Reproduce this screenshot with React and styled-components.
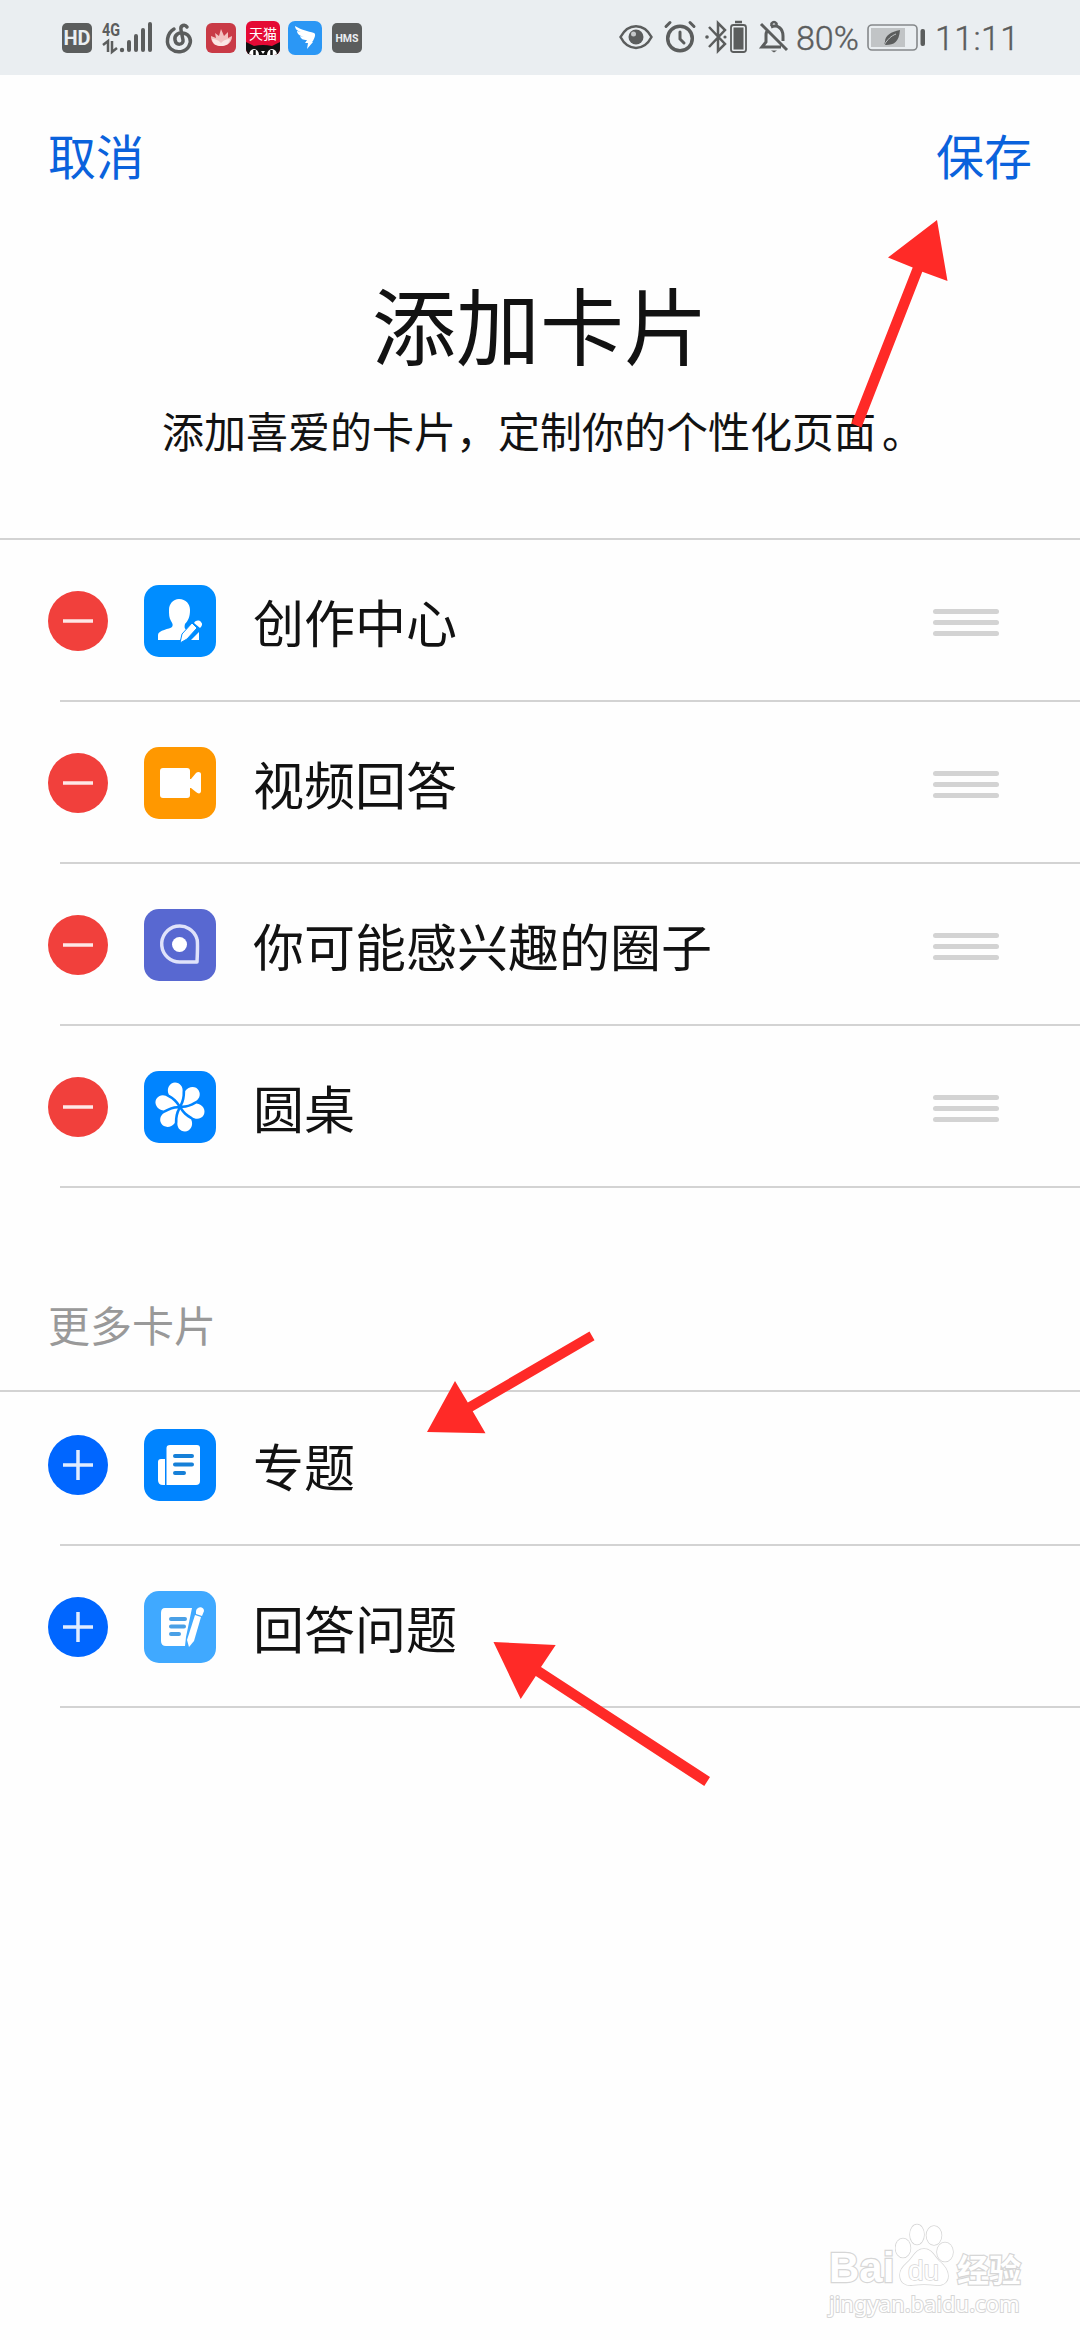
import styled, { createGlobalStyle } from 'styled-components'

const GlobalStyle = createGlobalStyle`
* {
  box-sizing: border-box;
}
body {
  margin: 0;
  background: #fefefe;
  font-family: "Noto Sans CJK SC", sans-serif;
  color: #121212;
}
`

const Page = styled.div`
position: relative;
width: 1080px;
height: 2340px;
overflow: hidden;
background: #fefefe;
`

const StatusBar = styled.div`
height: 75px;
background: #eaeef1;
display: flex;
align-items: flex-start;
padding-left: 62px;
color: #5b5d5d;
`

const StatusItem = styled.div`
flex: none;
width: ${(p) => p.$w}px;
margin-left: ${(p) => p.$gap || 0}px;
margin-top: ${(p) => p.$top || 21}px;
svg {
  display: block;
  overflow: visible;
}
`

const StatusBadge = styled(StatusItem)`
height: 30px;
border-radius: 5px;
background: #5b5d5d;
color: #eaeef1;
font-family: "Roboto", sans-serif;
font-weight: ${(p) => p.$weight};
font-size: ${(p) => p.$size}px;
line-height: 31px;
text-align: center;
`

const StatusText = styled(StatusItem)`
font-family: "Roboto", sans-serif;
font-weight: 300;
font-size: 34px;
line-height: 34px;
letter-spacing: ${(p) => p.$spacing || 0}px;
white-space: nowrap;
-webkit-text-stroke: 0.4px #5b5d5d;
`

const Tmall = styled(StatusItem)`
position: relative;
height: 34px;
border-radius: 6px;
overflow: hidden;
background: #e50a35;
color: #fff;
font-size: 14px;
line-height: 25px;
text-align: center;
svg {
  position: absolute;
  left: 0;
  bottom: 0;
}
`

const Toolbar = styled.div`
display: flex;
justify-content: space-between;
padding: 43px 48px 0;
`

const TextButton = styled.button`
border: 0;
padding: 0;
background: none;
font-family: inherit;
font-size: 48px;
line-height: 72px;
color: #0a62dc;
`

const Title = styled.h1`
margin: 85px 0 0;
font-size: 84px;
font-weight: 400;
line-height: 96px;
text-align: center;
`

const Subtitle = styled.p`
margin: 29px 0 0;
font-size: 42px;
line-height: 60px;
text-align: center;
`

const FullStop = styled.span`
margin: 0 -6px 0 6px;
`

const SectionTitle = styled.h2`
margin: 106px 0 0;
padding-left: 48px;
font-size: 42px;
font-weight: 400;
line-height: 60px;
color: #999;
`

const CardList = styled.ul`
list-style: none;
margin: ${(p) => p.$top}px 0 0;
padding: 0;
border-top: 2px solid #d3d3d3;
`

const Row = styled.li`
display: flex;
align-items: center;
height: 162px;
margin-left: 60px;
padding-top: 2px;
border-bottom: 2px solid #d3d3d3;
${(p) => p.$short && 'height: 154px; padding: 0 0 6px;'}
`

const ToggleButton = styled.button`
flex: none;
width: 60px;
height: 60px;
margin-left: -12px;
padding: 0;
border: 0;
border-radius: 50%;
background: ${(p) => (p.$add ? '#0066ff' : '#f1403c')};
svg {
  display: block;
}
`

const IconTile = styled.div`
flex: none;
width: 72px;
height: 72px;
margin-left: 36px;
border-radius: 15px;
background: ${(p) => p.$color};
svg {
  display: block;
}
`

const Label = styled.span`
flex: 1;
margin-left: 37px;
font-size: 51px;
line-height: 76px;
`

const Handle = styled.div`
display: flex;
flex-direction: column;
gap: 6px;
width: 66px;
margin: 3px 81px 0 0;
`

const HandleBar = styled.div`
height: 5px;
border-radius: 3px;
background: #d3d3d3;
`

// hints drawn over the page
const Arrows = styled.svg`
position: absolute;
left: 0;
top: 0;
pointer-events: none;
`

const Watermark = styled.div`
position: absolute;
left: 829px;
top: 2222px;
width: 196px;
color: #fff;
-webkit-text-stroke: 2.4px #d6d6d6;
paint-order: stroke fill;
`

const WatermarkLogo = styled.div`
display: flex;
align-items: flex-end;
height: 66px;
svg {
  flex: none;
}
`

const WatermarkWord = styled.span`
font-family: ${(p) => (p.$cjk ? '"Noto Sans CJK SC"' : '"Liberation Sans"')}, sans-serif;
font-weight: 700;
font-size: ${(p) => (p.$cjk ? 32 : 42)}px;
line-height: 40px;
white-space: nowrap;
width: ${(p) => (p.$cjk ? 67 : 66)}px;
`

const WatermarkUrl = styled.div`
font-family: "Noto Sans", sans-serif;
font-size: 22px;
line-height: 30px;
white-space: nowrap;
-webkit-text-stroke-width: 2px;
`

const ICONS = {
  creator: (
    <svg width="72" height="72" viewBox="0 0 72 72" fill="#fff">
      <path d="M35 14c7 0 11 5 11 11 0 7-2 11-5 14-1 4 0 5 2 6l4 1-11 9H14v-5c0-5 12-6 14-8 1-2 1-3-1-6-2-3-2-7-2-11 0-6 4-11 10-11z" />
      <path d="M55 47v8h-8z" />
      <path d="M36 58l2-9 10-11 5 5-10 11z" stroke="#008dff" strokeWidth="1" />
      <path d="M50 38c2-3 5-3 7-1 2 2 1 4-1 6z" />
    </svg>
  ),
  video: (
    <svg width="72" height="72" viewBox="0 0 72 72" fill="#fff">
      <rect x="16" y="21" width="30" height="30" rx="3" />
      <path d="M45 32h2l5-6c2-2 5-1 5 1v17c0 3-3 3-5 1l-5-4h-2z" />
    </svg>
  ),
  circle: (
    <svg width="72" height="72" viewBox="0 0 72 72" fill="none">
      <path d="M53 53H36A18 18 0 1 1 53 30q1 3 0 23z" stroke="#dfe2fa" strokeWidth="3.500" strokeLinejoin="round" />
      <circle cx="35.500" cy="35.500" r="7.500" fill="#fff" />
    </svg>
  ),
  table: (
    <svg width="72" height="72" viewBox="0 0 72 72" fill="#fff">
      {[0, 60, 120, 180, 240, 300].map((angle) => (
        <path
          key={angle}
          transform={`rotate(${angle} 36 36)`}
          d="M35.800 33.500C34 30 30 26.500 24.800 23.500 22 17.500 26 11.500 31 11.500 36 11.500 39.500 16 38.500 21 38.800 26 37.500 30 35.800 33.500z"
        />
      ))}
    </svg>
  ),
  topic: (
    <svg width="72" height="72" viewBox="0 0 72 72">
      <path d="M21 30h-4q-3 0-3 3v18q0 5 5 5h2V30z" fill="#fff" />
      <path d="M26 16h27q3 0 3 3v33q0 4-4 4H22.500V19q0-3 3.500-3z" fill="#fff" />
      <path d="M31 27h17M31 35.500h17M31 44h9" stroke="#1680d8" strokeWidth="4" strokeLinecap="round" />
    </svg>
  ),
  question: (
    <svg width="72" height="72" viewBox="0 0 72 72">
      <path d="M21 17h27l-6 29-1 9H22q-5 0-5-5V22q0-5 4-5z" fill="#fff" />
      <path d="M27 28h14M27 35.500h13M27 43h8" stroke="#4aa0e6" strokeWidth="4" strokeLinecap="round" />
      <path d="M51 24l6 2-7 24-5 6-2-7z" fill="#fff" />
      <path d="M52 20c1-5 8-5 8 0l-2 5-6-2z" fill="#fff" />
    </svg>
  )
}

const added = [
  { label: '创作中心', icon: 'creator', color: '#008dff' },
  { label: '视频回答', icon: 'video', color: '#ff9800' },
  { label: '你可能感兴趣的圈子', icon: 'circle', color: '#5868d1' },
  { label: '圆桌', icon: 'table', color: '#0084ff' }
]

const more = [
  { label: '专题', icon: 'topic', color: '#0084ff' },
  { label: '回答问题', icon: 'question', color: '#40a9ff' }
]

const CardRow = ({ card, add, short }) => (
  <Row $short={short}>
    <ToggleButton $add={add}>
      <svg width="60" height="60" viewBox="0 0 60 60" stroke="#fff" strokeOpacity="0.880" strokeWidth="3.500">
        <path d={add ? 'M15 30h30M30 15v30' : 'M15 30h30'} />
      </svg>
    </ToggleButton>
    <IconTile $color={card.color}>{ICONS[card.icon]}</IconTile>
    <Label>{card.label}</Label>
    {!add && (
      <Handle>
        <HandleBar />
        <HandleBar />
        <HandleBar />
      </Handle>
    )}
  </Row>
)

const Status = () => (
  <StatusBar>
    <StatusBadge $w={30} $top={23} $size={20} $weight={700}>HD</StatusBadge>
    <StatusItem $w={50} $gap={10}>
      <svg width="50" height="32" viewBox="0 0 50 32" fill="currentColor">
        <text x="0" y="15" fontFamily="Roboto" fontWeight="700" fontSize="18" textLength="18" lengthAdjust="spacingAndGlyphs">4G</text>
        <path d="M1 24l5-4v11M10 20v11l5-4" fill="none" stroke="currentColor" strokeWidth="2.500" />
        <circle cx="20" cy="29" r="2.200" />
        <path d="M27 29v-8M34 29v-14M41 29v-20M48 29V3" stroke="currentColor" strokeWidth="4" strokeLinecap="round" />
      </svg>
    </StatusItem>
    <StatusItem $w={28} $gap={13}>
      <svg width="28" height="32" viewBox="0 0 28 32" fill="none" stroke="currentColor" strokeWidth="3.500" strokeLinecap="round">
        <path d="M22 6c-2-3-7-2-6 3l2 10c1 5-7 6-8 0-1-5 4-8 8-7 7 1 9 8 6 13-3 6-12 8-18 3C0 23 2 12 9 8" />
      </svg>
    </StatusItem>
    <StatusItem $w={30} $gap={13} $top={23}>
      <svg width="30" height="30" viewBox="0 0 30 30">
        <rect width="30" height="30" rx="6" fill="#c93a46" />
        <path d="M5 13l5 2-1-5 4 3 2-7 3 7 4-4v6l4-2c0 6-4 10-11 10S5 19 5 13z" fill="#f3c1c0" />
        <path d="M6 16c4 0 6 1 9 4 3-3 5-4 9-4-1 5-4 7-9 7s-8-2-9-7z" fill="#fbe7e4" />
      </svg>
    </StatusItem>
    <Tmall $w={34} $gap={10}>
      天猫
      <svg width="34" height="13" viewBox="0 0 34 13">
        <path d="M0 0l8 4q9-2 18 0l8-4v13H0z" fill="#111" />
        <path d="M3 13a5 6 0 0 1 10 0zM21 13a5 6 0 0 1 10 0zM15 9h4l-2 3z" fill="#fff" />
        <path d="M8.500 8v5M25.500 8v5" stroke="#111" strokeWidth="2.500" />
      </svg>
    </Tmall>
    <StatusItem $w={34} $gap={8}>
      <svg width="34" height="34" viewBox="0 0 34 34">
        <rect width="34" height="34" rx="7" fill="#2b97f5" />
        <path d="M7 5c6 4 13 5 19 7 2 1 1 4-1 8h-1l1 1-6 7 1-6h-3l2-3c-4 0-6-1-7-4l4 1c-4-1-7-3-7-6l4 1C9 10 7 8 7 5z" fill="#fff" />
      </svg>
    </StatusItem>
    <StatusBadge $w={30} $gap={10} $top={23} $size={10.5} $weight={700}>HMS</StatusBadge>

    <StatusItem $w={34} $gap={257}>
      <svg width="34" height="32" viewBox="0 0 34 32" fill="none" stroke="currentColor" strokeWidth="2.500">
        <path d="M1.500 16C9 1.500 25 1.500 32.500 16 25 30.500 9 30.500 1.500 16z" />
        <circle cx="17" cy="16" r="7.500" fill="currentColor" stroke="none" />
        <circle cx="14.500" cy="13" r="2.500" fill="#c5c8ca" stroke="none" />
      </svg>
    </StatusItem>
    <StatusItem $w={32} $gap={11}>
      <svg width="32" height="32" viewBox="0 0 32 32" fill="none" stroke="currentColor" strokeWidth="3" strokeLinecap="round">
        <circle cx="16" cy="17.500" r="12.300" strokeWidth="3.500" />
        <path d="M16 11v7l4 4M2 5.500l4-4M26 1.500l4 4" />
      </svg>
    </StatusItem>
    <StatusItem $w={42} $gap={10}>
      <svg width="42" height="32" viewBox="0 0 42 32" fill="none" stroke="currentColor" strokeWidth="2.500">
        <path d="M3 6l16 17-7 7V2l7 7L3 26" />
        <circle cx="1" cy="16" r="1.800" fill="currentColor" stroke="none" />
        <circle cx="19" cy="16" r="1.600" fill="currentColor" stroke="none" />
        <rect x="25" y="4" width="15" height="27" rx="2.500" strokeWidth="1.800" />
        <rect x="27.500" y="6.500" width="10" height="22" fill="currentColor" stroke="none" />
        <path d="M29 1h7" />
      </svg>
    </StatusItem>
    <StatusItem $w={28} $gap={12}>
      <svg width="28" height="32" viewBox="0 0 28 32" fill="none" stroke="currentColor" strokeWidth="3">
        <path d="M1 3l26 26M21 26H2l4-5V14c0-2 .5-3 1-4M11 6c7-3 12 2 12 9v5" />
        <path d="M11.500 5V2.500q2.500-3 5 0V5" strokeWidth="2.500" />
        <path d="M11 29.500h6l-3 2z" fill="currentColor" stroke="none" />
      </svg>
    </StatusItem>
    <StatusText $w={62} $gap={8}>80%</StatusText>
    <StatusItem $w={59} $gap={9}>
      <svg width="59" height="32" viewBox="0 0 59 32">
        <rect x="1" y="4" width="49" height="25" rx="4" fill="none" stroke="#85888a" strokeWidth="1.600" />
        <rect x="4" y="7" width="34" height="19" fill="#c1c4c6" />
        <path d="M33 9c-9 2-15 5-15 12l-1 2 2 1c8 0 13-3 14-15z" fill="currentColor" />
        <path d="M17 24c4-6 7-9 12-11" fill="none" stroke="#c1c4c6" />
        <rect x="53.500" y="8" width="4.500" height="17" rx="2" fill="currentColor" />
      </svg>
    </StatusItem>
    <StatusText $w={80} $gap={9} $spacing={0.4}>11:11</StatusText>
  </StatusBar>
)

export default function App() {
  return (
    <Page>
      <GlobalStyle />
      <Status />
      <Toolbar>
        <TextButton>取消</TextButton>
        <TextButton>保存</TextButton>
      </Toolbar>
      <Title>添加卡片</Title>
      <Subtitle>添加喜爱的卡片，定制你的个性化页面<FullStop>。</FullStop></Subtitle>
      <CardList $top={78}>
        {added.map((card) => (
          <CardRow key={card.label} card={card} />
        ))}
      </CardList>
      <SectionTitle>更多卡片</SectionTitle>
      <CardList $top={36}>
        {more.map((card, index) => (
          <CardRow key={card.label} card={card} add short={index === 0} />
        ))}
      </CardList>
      <Arrows width="1080" height="2340" viewBox="0 0 1080 2340" fill="#ff2a27">
        <path d="M937 220L947.500 281 922.300 271.700 861.500 427.500 851.500 423.500 912.700 267.500 888 257.500z" />
        <path d="M427 1432L455 1381 467.800 1402.500 589.500 1331.500 594.500 1340.300 472.700 1411.300 485.500 1433.300z" />
        <path d="M493.500 1642L555.700 1645 541 1667 710 1777 704.300 1786 535.800 1676 520.700 1699z" />
      </Arrows>
      <Watermark>
        <WatermarkLogo>
          <WatermarkWord>Bai</WatermarkWord>
          <svg width="62" height="66" viewBox="0 0 62 66" fill="#fff" stroke="#d6d6d6" strokeWidth="1.500">
            <ellipse cx="8" cy="26" rx="7.500" ry="9.500" />
            <ellipse cx="22" cy="12.500" rx="7" ry="10" />
            <ellipse cx="39" cy="13.500" rx="7.500" ry="9.500" />
            <ellipse cx="50" cy="30" rx="8" ry="9.500" />
            <path d="M29 27c8 0 10 7 15 12 5 4 9 9 9 15 0 7-6 10-12 9-8-1-16-1-24 0-7 1-12-3-12-10 0-6 4-9 9-14 5-5 7-12 15-12z" />
            <text x="13" y="58" fontFamily="Liberation Sans" fontSize="28">du</text>
          </svg>
          <WatermarkWord $cjk>经验</WatermarkWord>
        </WatermarkLogo>
        <WatermarkUrl>jingyan.baidu.com</WatermarkUrl>
      </Watermark>
    </Page>
  )
}
